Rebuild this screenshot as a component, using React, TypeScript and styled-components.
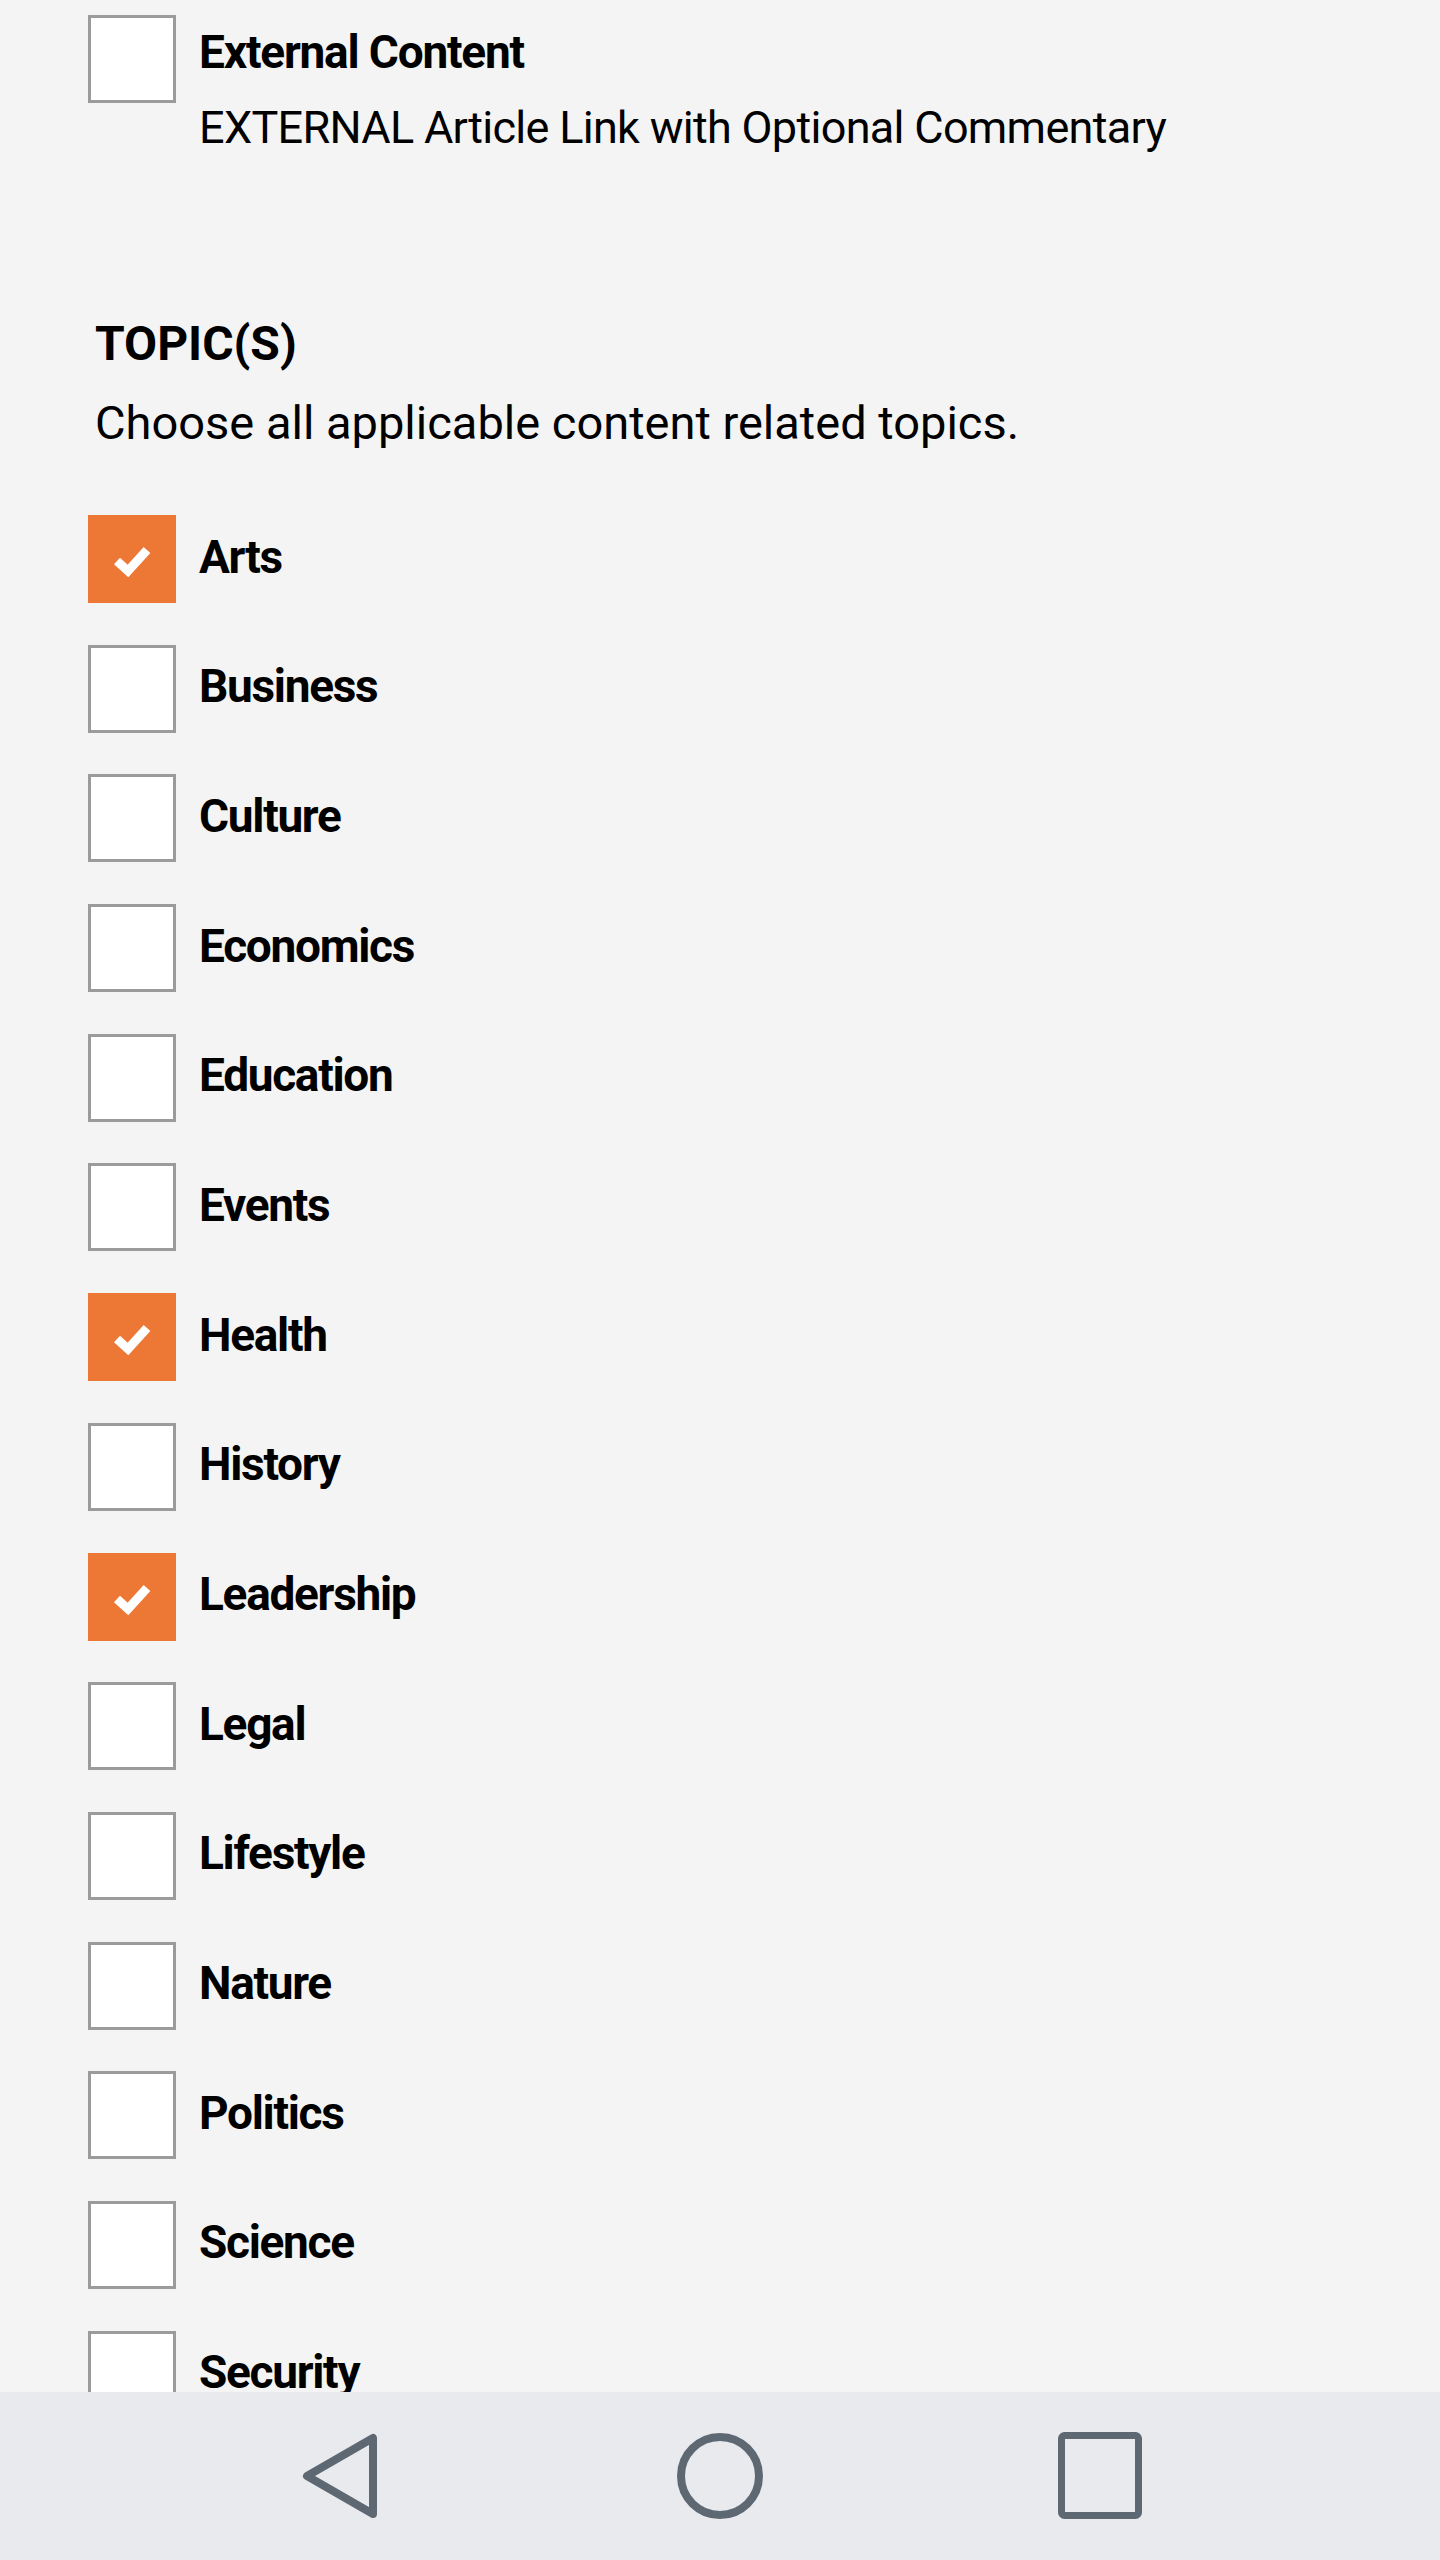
import React, { useState } from "react";
import styled, { createGlobalStyle } from "styled-components";

const GlobalStyle = createGlobalStyle`
  body {
    margin: 0;
    font-family: Roboto, "Liberation Sans", sans-serif;
    color: #000;
    background: #f4f4f4;
  }
`;

// the list continues under the nav bar; Security is the last one partly visible
const TOPICS = [
  "Arts",
  "Business",
  "Culture",
  "Economics",
  "Education",
  "Events",
  "Health",
  "History",
  "Leadership",
  "Legal",
  "Lifestyle",
  "Nature",
  "Politics",
  "Science",
  "Security",
];

const Screen = styled.div`
  height: 2560px;
  display: flex;
  flex-direction: column;
  background: #f4f4f4;
  overflow: hidden;
`;

const Content = styled.div`
  flex: 1;
  overflow: hidden;
  padding-left: 88px;
`;

const ExternalRow = styled.div`
  display: flex;
  gap: 23px;
  margin-top: 15px;
`;

const TextColumn = styled.div`
  padding-top: 9px;
`;

const OptionTitle = styled.div`
  font-size: 46px;
  line-height: 56px;
  font-weight: 700;
  letter-spacing: -1.2px;
`;

const OptionSubtitle = styled.div`
  font-size: 45px;
  line-height: 56px;
  font-weight: 400;
  letter-spacing: -0.7px;
  margin-top: 20px;
`;

const Section = styled.div`
  margin-top: 159px;
  padding-left: 7px;
`;

const SectionTitle = styled.div`
  font-size: 48px;
  line-height: 58px;
  font-weight: 700;
`;

const SectionHint = styled.div`
  font-size: 47px;
  line-height: 58px;
  margin-top: 21px;
`;

const TopicList = styled.div`
  display: flex;
  flex-direction: column;
  gap: 41.7px;
  margin-top: 63px;
`;

const TopicRow = styled.label`
  display: flex;
  align-items: center;
  gap: 23px;
  cursor: pointer;
`;

const Box = styled.span<{ $checked: boolean }>`
  box-sizing: border-box;
  width: 88px;
  height: 88px;
  flex-shrink: 0;
  display: flex;
  align-items: center;
  justify-content: center;
  background: ${(p) => (p.$checked ? "#ed7734" : "#fff")};
  border: ${(p) => (p.$checked ? "none" : "3px solid #9b9b9b")};
`;

const TopicLabel = styled.span`
  font-size: 46px;
  line-height: 56px;
  font-weight: 700;
  letter-spacing: -1.3px;
  margin-bottom: 5px;
`;

const NavBar = styled.div`
  height: 168px;
  flex-shrink: 0;
  background: #e9eaee;
  display: flex;
  justify-content: center;
  align-items: center;
`;

const NavButton = styled.div`
  width: 380px;
  height: 168px;
  display: flex;
  align-items: center;
  justify-content: center;
`;

const Check = () => (
  <svg width="88" height="88" viewBox="0 0 88 88">
    <path d="M29 46 L40 56 L59 35" fill="none" stroke="#fff" strokeWidth="9" />
  </svg>
);

const CheckBox = ({ checked }: { checked: boolean }) => (
  <Box $checked={checked}>{checked && <Check />}</Box>
);

const BackIcon = () => (
  <svg width="96" height="96" viewBox="0 0 96 96">
    <polygon
      points="15,48 81,10 81,86"
      fill="none"
      stroke="#5e6872"
      strokeWidth="8"
      strokeLinejoin="round"
    />
  </svg>
);

const HomeIcon = () => (
  <svg width="96" height="96" viewBox="0 0 96 96">
    <circle cx="48" cy="48" r="39" fill="none" stroke="#5e6872" strokeWidth="8" />
  </svg>
);

const RecentsIcon = () => (
  <svg width="96" height="96" viewBox="0 0 96 96">
    <rect x="9.5" y="7.5" width="77" height="80" rx="3" fill="none" stroke="#5e6872" strokeWidth="7" />
  </svg>
);

export default function App() {
  const [selected, setSelected] = useState<string[]>(["Arts", "Health", "Leadership"]);
  const [external, setExternal] = useState(false);

  const toggle = (t: string) =>
    setSelected((s) => (s.includes(t) ? s.filter((x) => x !== t) : [...s, t]));

  return (
    <Screen>
      <GlobalStyle />
      <Content>
        <ExternalRow onClick={() => setExternal(!external)}>
          <CheckBox checked={external} />
          <TextColumn>
            <OptionTitle>External Content</OptionTitle>
            <OptionSubtitle>EXTERNAL Article Link with Optional Commentary</OptionSubtitle>
          </TextColumn>
        </ExternalRow>

        <Section>
          <SectionTitle>TOPIC(S)</SectionTitle>
          <SectionHint>Choose all applicable content related topics.</SectionHint>
        </Section>

        <TopicList>
          {TOPICS.map((t) => (
            <TopicRow key={t} onClick={() => toggle(t)}>
              <CheckBox checked={selected.includes(t)} />
              <TopicLabel>{t}</TopicLabel>
            </TopicRow>
          ))}
        </TopicList>
      </Content>
      <NavBar>
        <NavButton>
          <BackIcon />
        </NavButton>
        <NavButton>
          <HomeIcon />
        </NavButton>
        <NavButton>
          <RecentsIcon />
        </NavButton>
      </NavBar>
    </Screen>
  );
}
